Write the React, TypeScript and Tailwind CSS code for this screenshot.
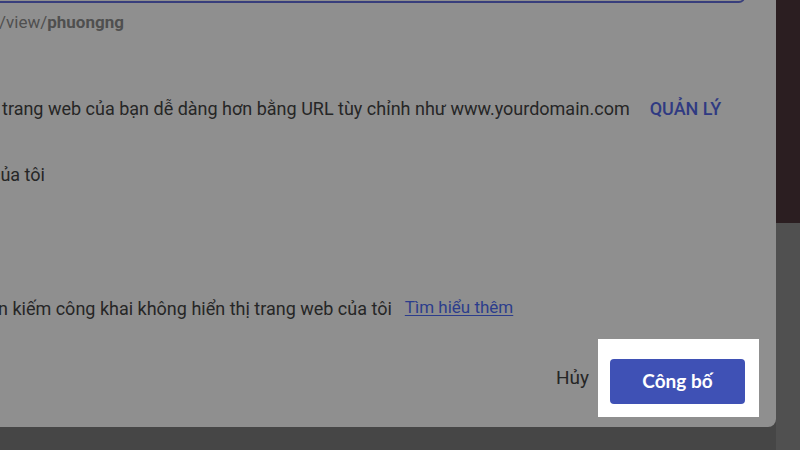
export default function App() {
  return (
    <div className="flex w-[800px] h-[450px] overflow-hidden bg-[#464646] font-['Roboto','Liberation_Sans',sans-serif]">
      {/* dialog, cut off on the left and top */}
      <div className="flex flex-col w-[776px] h-[427px] shrink-0 bg-[#8f8f8f] rounded-br-[8px] overflow-hidden">
        {/* focused url field, only its lower edge shows */}
        <div className="-mt-[40px] -ml-[20px] mr-[31px] h-[43px] border-2 border-[#383e7c] rounded-[6px]" />

        <div className="mt-[7px] h-[24px] leading-[24px] text-[17px] text-[#4f4f4f] -ml-[1px] whitespace-nowrap">
          /view/<span className="font-bold">phuongng</span>
        </div>

        <div className="mt-[61px] h-[26px] flex items-center gap-[20px] whitespace-nowrap">
          <span className="ml-[2px] text-[18px] text-[#262626]">
            trang web của bạn dễ dàng hơn bằng URL tùy chỉnh như www.yourdomain.com
          </span>
          <span className="text-[18px] font-medium text-[#2f3a82]">QUẢN LÝ</span>
        </div>

        <div className="mt-[41px] h-[26px] leading-[26px] text-[18px] text-[#262626] -ml-[9px] whitespace-nowrap">
          của tôi
        </div>

        <div className="mt-[107px] h-[26px] flex items-center gap-[13px] whitespace-nowrap">
          <span className="-ml-[2px] text-[18px] text-[#262626]">
            n kiếm công khai không hiển thị trang web của tôi
          </span>
          <span className="text-[17px] text-[#2c3d8c] underline underline-offset-2">Tìm hiểu thêm</span>
        </div>

        <div className="mt-[18px] flex items-center justify-end gap-[9px] pr-[17px]">
          <span className="text-[19px] text-[#262626]">Hủy</span>
          <div className="bg-white pl-[12px] pr-[14px] pt-[20px] pb-[13px]">
            <button className="w-[135px] h-[45px] rounded-[4px] bg-[#3f51b5] text-white text-[19px] font-bold font-['Lato','Roboto',sans-serif]">
              Công bố
            </button>
          </div>
        </div>
      </div>

      {/* page behind the dialog */}
      <div className="flex flex-col flex-1">
        <div className="h-[223px] bg-[#2b1e21]" />
        <div className="flex-1 bg-[#505050]" />
      </div>
    </div>
  );
}
